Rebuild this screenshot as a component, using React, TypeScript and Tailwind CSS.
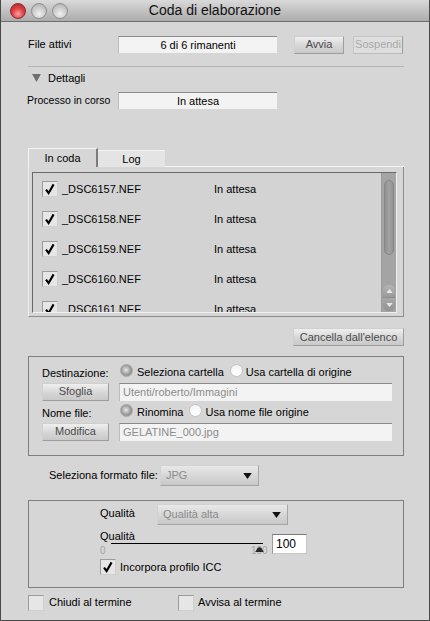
import React from 'react';

const font = "font-['Liberation_Sans',Arial,sans-serif]";

const Check: React.FC<{ checked?: boolean }> = ({ checked }) => (
  <div className="relative w-[16px] h-[16px] shrink-0 bg-[#e6e6e6] border border-t-[#9c9c9c] border-l-[#9c9c9c] border-r-[#cfcfcf] border-b-[#cfcfcf]">
    {checked && (
      <svg viewBox="0 0 16 16" className="absolute -left-px -top-px w-[16px] h-[16px]">
        <path d="M4 8.6 L6.6 12 L11.6 3.4" fill="none" stroke="#000" strokeWidth="2.1" strokeLinejoin="miter" />
      </svg>
    )}
  </div>
);

const Radio: React.FC<{ selected?: boolean }> = ({ selected }) => (
  <div
    className={
      'w-[13px] h-[13px] rounded-full shrink-0 border ' +
      (selected
        ? 'border-[#a8a8a8] bg-[radial-gradient(circle_at_45%_45%,#e8e8e8_0%,#9a9a9a_55%,#8c8c8c_100%)]'
        : 'border-[#c4c4c4] bg-[linear-gradient(#f4f4f4,#ffffff)]')
    }
  />
);

const Button: React.FC<{ label: string; className?: string; disabled?: boolean }> = ({ label, className, disabled }) => (
  <div
    className={
      'h-[18px] flex items-center justify-center border text-[11px] ' +
      (disabled
        ? 'border-[#c6c6c6] border-r-[#9a9a9a] border-b-[#bdbdbd] bg-[#dedede] text-[#a9a9a9] '
        : 'border-[#cfcfcf] border-r-[#9d9d9d] border-b-[#9d9d9d] bg-[linear-gradient(#efefef,#d6d6d6_55%,#c9c9c9)] text-[#4a4a4a] ') +
      (className || '')
    }
  >
    {label}
  </div>
);

const Field: React.FC<{ value: string; className?: string; center?: boolean; muted?: boolean }> = ({ value, className, center, muted }) => (
  <div
    className={
      'h-[17px] flex items-center bg-[#f3f3f3] border-t border-t-[#8a8a8a] border-l border-l-[#bdbdbd] ' +
      (center ? 'justify-center ' : 'pl-[3px] ') +
      (muted ? 'text-[#8c8c8c] ' : 'text-black ') +
      (className || '')
    }
  >
    {value}
  </div>
);

const Dropdown: React.FC<{ value: string; className?: string }> = ({ value, className }) => (
  <div
    className={
      'flex items-center justify-between pl-[5px] pr-[6px] border border-[#d2d2d2] border-r-[#a6a6a6] border-b-[#a6a6a6] bg-[linear-gradient(#e8e8e8,#d4d4d4_60%,#c8c8c8)] text-[#8a8a8a] ' +
      (className || '')
    }
  >
    <span>{value}</span>
    <svg viewBox="0 0 10 7" className="w-[9px] h-[6px]">
      <path d="M0 0 H10 L5 7 Z" fill="#111" />
    </svg>
  </div>
);

const files = ['_DSC6157.NEF', '_DSC6158.NEF', '_DSC6159.NEF', '_DSC6160.NEF', '_DSC6161.NEF'];

const App: React.FC = () => {
  return (
    <div className={`w-[430px] h-[621px] bg-[#d6d6d6] border-x border-b border-[#4a4a4a] flex flex-col text-[11px] text-black overflow-hidden ${font}`}>
      {/* title bar */}
      <div className="relative h-[22px] shrink-0 flex items-center bg-[linear-gradient(#dadada,#c2c2c2_50%,#acacac)] border-b border-[#6e6e6e]">
        <div className="flex items-center gap-[5px] pl-[9px]">
          <div className="w-[16px] h-[16px] rounded-full border border-[#8a2a2a] bg-[radial-gradient(circle_at_50%_70%,#ffa0a0_0%,#e04545_45%,#a82020_100%)]" />
          <div className="w-[16px] h-[16px] rounded-full border border-[#8f8f8f] bg-[radial-gradient(circle_at_50%_70%,#f0f0f0_0%,#cdcdcd_50%,#a8a8a8_100%)]" />
          <div className="w-[16px] h-[16px] rounded-full border border-[#8f8f8f] bg-[radial-gradient(circle_at_50%_70%,#f0f0f0_0%,#cdcdcd_50%,#a8a8a8_100%)]" />
        </div>
        <div className="absolute inset-0 flex items-center justify-center text-[14px] text-[#111] pointer-events-none">
          Coda di elaborazione
        </div>
      </div>

      <div className="flex flex-col pl-[27px] pr-[25px]">
        {/* file attivi */}
        <div className="mt-[14px] h-[17px] flex items-center">
          <span className="w-[90px]">File attivi</span>
          <Field value="6 di 6 rimanenti" center className="w-[159px]" />
          <Button label="Avvia" className="ml-[17px] w-[50px]" />
          <Button label="Sospendi" disabled className="ml-[9px] w-[50px]" />
        </div>

        <div className="mt-[13px] h-px bg-[#b3b3b3]" />

        <div className="mt-[5px] h-[12px] flex items-center">
          <svg viewBox="0 0 10 9" className="ml-[4px] w-[9px] h-[8px]">
            <path d="M0 0 H10 L5 9 Z" fill="#6f6f6f" />
          </svg>
          <span className="ml-[7px]">Dettagli</span>
        </div>

        <div className="mt-[8px] h-[17px] flex items-center">
          <span className="w-[91px] -ml-px text-[10.5px]">Processo in corso</span>
          <Field value="In attesa" center className="w-[159px]" />
        </div>

        {/* tabs */}
        <div className="mt-[39px] h-[19px] flex items-end">
          <div className="h-[19px] w-[70px] flex items-center justify-center bg-[#d6d6d6] border-t border-l border-t-[#f6f6f6] border-l-[#f6f6f6] border-r-2 border-r-[#7c7c7c]">
            In coda
          </div>
          <div className="h-[17px] w-[67px] flex items-center justify-center bg-[#e4e4e4] border-t border-t-[#f4f4f4]">
            Log
          </div>
          <div className="flex-1 h-px bg-[#f6f6f6]" />
        </div>
        <div className="h-[150px] flex flex-col border-l border-l-[#eeeeee] border-r border-r-[#8c8c8c] border-b border-b-[#8c8c8c] pl-[3px] pr-[6px] pt-[5px] pb-[3px]">
          <div className="flex-1 flex overflow-hidden border-t border-l border-t-[#6a6a6a] border-l-[#6a6a6a] border-r border-b border-r-[#f0f0f0] border-b-[#f0f0f0] bg-[#d3d3d3]">
            <div className="flex-1 flex flex-col overflow-hidden pt-px">
              {files.map((f) => (
                <div key={f} className="h-[30px] shrink-0 flex items-center">
                  <div className="ml-[9px]">
                    <Check checked />
                  </div>
                  <span className="ml-[4px] w-[152px]">{f}</span>
                  <span>In attesa</span>
                </div>
              ))}
            </div>
            {/* scrollbar */}
            <div className="w-[15px] shrink-0 flex flex-col bg-[#a4a4a4] border-l border-[#9a9a9a]">
              <div className="mt-[7px] mx-[2px] h-[75px] rounded-full bg-[linear-gradient(90deg,#8f8f8f,#a2a2a2_50%,#929292)] border border-[#888]" />
              <div className="flex-1" />
              <div className="mx-[1px] h-[13px] rounded-t-[5px] bg-[linear-gradient(#b4b4b4,#9a9a9a)] border-b border-[#8a8a8a] flex items-center justify-center">
                <svg viewBox="0 0 8 5" className="w-[7px] h-[4px]"><path d="M0 5 L4 0 L8 5 Z" fill="#e8e8e8" /></svg>
              </div>
              <div className="mx-[1px] mb-px h-[13px] rounded-b-[5px] bg-[linear-gradient(#a8a8a8,#929292)] flex items-center justify-center">
                <svg viewBox="0 0 8 5" className="w-[7px] h-[4px]"><path d="M0 0 L4 5 L8 0 Z" fill="#e8e8e8" /></svg>
              </div>
            </div>
          </div>
        </div>

        <div className="mt-[11px] flex justify-end">
          <Button label="Cancella dall'elenco" className="w-[111px]" />
        </div>

        {/* destinazione */}
        <div className="mt-[10px] h-[100px] border border-[#7f7f7f] pl-[13px] pr-[11px] pt-[6px] flex flex-col">
          <div className="h-[18px] flex">
            <div className="w-[78px] flex items-end">Destinazione:</div>
            <div className="flex items-start pt-px">
              <Radio selected />
              <span className="ml-[4px]">Seleziona cartella</span>
              <div className="ml-[6px]"><Radio /></div>
              <span className="ml-[3px]">Usa cartella di origine</span>
            </div>
          </div>
          <div className="mt-[1px] h-[19px] flex items-center">
            <Button label="Sfoglia" className="w-[67px]" />
            <Field value="Utenti/roberto/Immagini" muted className="ml-[10px] flex-1 h-[18px]" />
          </div>
          <div className="mt-[1px] h-[19px] flex">
            <div className="w-[78px] flex items-end">Nome file:</div>
            <div className="flex items-start pt-[2px]">
              <Radio selected />
              <span className="ml-[4px]">Rinomina</span>
              <div className="ml-[6px]"><Radio /></div>
              <span className="ml-[3px]">Usa nome file origine</span>
            </div>
          </div>
          <div className="mt-[1px] h-[19px] flex items-center">
            <Button label="Modifica" className="w-[67px]" />
            <Field value="GELATINE_000.jpg" muted className="ml-[10px] flex-1 h-[18px]" />
          </div>
        </div>

        {/* formato */}
        <div className="mt-[9px] h-[21px] flex items-center">
          <span className="ml-[21px] w-[111px]">Seleziona formato file:</span>
          <Dropdown value="JPG" className="w-[99px] h-[21px]" />
        </div>

        {/* qualita */}
        <div className="mt-[14px] h-[88px] border border-[#7f7f7f] pl-[71px] pt-[3px] flex flex-col">
          <div className="h-[21px] flex items-center">
            <span className="w-[57px] -mt-[3px]">Qualità</span>
            <Dropdown value="Qualità alta" className="w-[131px] h-[21px]" />
          </div>
          <div className="mt-[9px] h-[21px] flex">
            <div className="relative w-[166px] h-[21px]">
              <span className="absolute left-0 top-[-4px] leading-[13px]">Qualità</span>
              <div className="absolute left-[11px] top-[9px] w-[152px] h-px bg-black" />
              <span className="absolute left-0 top-[11px] leading-[12px] text-[10px] text-[#a4a4a4]">0</span>
              <span className="absolute left-[151px] top-[11px] leading-[12px] text-[10px] text-[#a4a4a4]">100</span>
              <svg viewBox="0 0 12 7" className="absolute left-[155px] top-[13px] w-[9px] h-[5px]">
                <path d="M0 7 L3 2 Q6 -1 9 2 L12 7 Z" fill="#2a2a2a" />
              </svg>
            </div>
            <div className="ml-[6px] w-[35px] h-[20px] bg-white border border-t-[#7a7a7a] border-l-[#9a9a9a] border-r-[#c8c8c8] border-b-[#c8c8c8] flex items-center pl-[3px] text-[12px]">
              100
            </div>
          </div>
          <div className="mt-[4px] h-[16px] flex items-center">
            <Check checked />
            <span className="ml-[4px]">Incorpora profilo ICC</span>
          </div>
        </div>

        {/* bottom */}
        <div className="mt-[6px] h-[17px] flex items-center">
          <Check />
          <span className="ml-[5px] w-[129px]">Chiudi al termine</span>
          <Check />
          <span className="ml-[4px]">Avvisa al termine</span>
        </div>
      </div>
    </div>
  );
};

export default App;
